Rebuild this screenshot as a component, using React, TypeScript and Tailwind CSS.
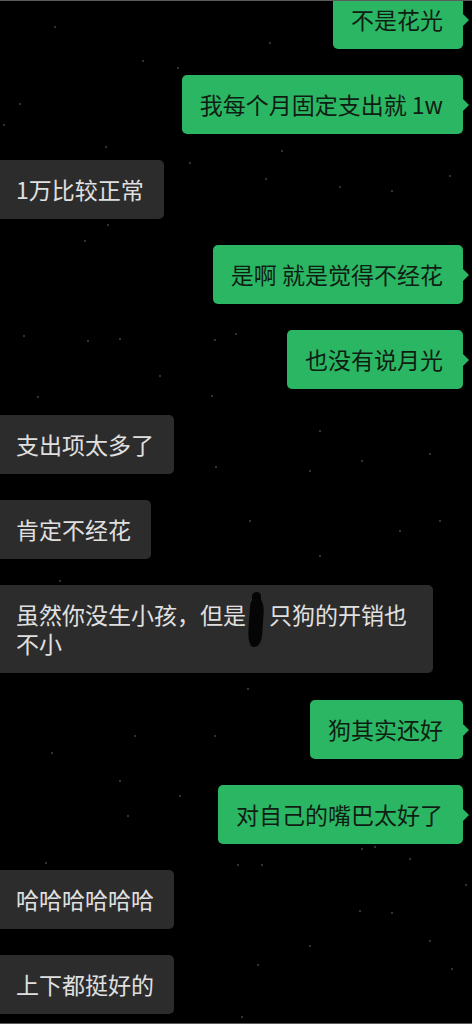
import { ReactNode } from "react";

type Msg = { me: boolean; text: ReactNode; wide?: boolean };

const font = { fontFamily: '"Noto Sans CJK SC", "Noto Sans", sans-serif' };

// the little smudge someone drew over the number of dogs
function Smudge() {
  return (
    <span className="relative inline-block w-[1em] align-top h-[29px]">
      <span className="absolute left-[3px] top-[-3px] w-[14px] h-[50px] bg-[#050505] rounded-[45%_55%_50%_40%/20%_30%_25%_35%] rotate-[4deg]" />
      <span className="absolute left-[6px] top-[-8px] w-[9px] h-[14px] bg-[#050505] rounded-full" />
    </span>
  );
}

const msgs: Msg[] = [
  { me: true, text: "不是花光" },
  { me: true, text: "我每个月固定支出就 1w" },
  { me: false, text: "1万比较正常" },
  { me: true, text: "是啊 就是觉得不经花" },
  { me: true, text: "也没有说月光" },
  { me: false, text: "支出项太多了" },
  { me: false, text: "肯定不经花" },
  {
    me: false,
    wide: true,
    text: (
      <>
        <div className="h-[29px] overflow-visible">
          虽然你没生小孩，但是
          <Smudge />
          只狗的开销也
        </div>
        <div className="h-[29px] overflow-visible">不小</div>
      </>
    ),
  },
  { me: true, text: "狗其实还好" },
  { me: true, text: "对自己的嘴巴太好了" },
  { me: false, text: "哈哈哈哈哈哈" },
  { me: false, text: "上下都挺好的" },
];

const dots = [
  [55, 26], [143, 60], [178, 67], [270, 42], [20, 103], [4, 124], [106, 146],
  [190, 162], [282, 150], [266, 178], [340, 186], [392, 190], [450, 175],
  [108, 224], [85, 240], [24, 335], [88, 340], [120, 338], [215, 339],
  [236, 333], [160, 375], [212, 395], [38, 396], [320, 430], [362, 460],
  [430, 453], [216, 466], [310, 470], [250, 520], [320, 555], [400, 530],
  [440, 520], [60, 580], [420, 640], [248, 688], [215, 735], [135, 735],
  [52, 752], [120, 780], [180, 795], [128, 815], [362, 848], [375, 846],
  [410, 858], [46, 862], [238, 864], [262, 864], [360, 910], [392, 912],
  [430, 940], [310, 945], [258, 964], [452, 968], [242, 1016], [466, 884],
];

export default function App() {
  return (
    <div
      className="relative w-[472px] h-[1024px] overflow-hidden bg-black border-t border-b border-[#5c5c5c]"
      style={font}
    >
      <svg className="absolute inset-0" width="472" height="1024">
        {dots.map(([x, y], i) => (
          <circle key={i} cx={x} cy={y} r={0.9} fill="#4a4a4a" />
        ))}
      </svg>
      <div className="relative flex flex-col gap-[26px] mt-[-11px]">
        {msgs.map((m, i) =>
          m.me ? (
            <div key={i} className="flex justify-end pr-[9px]">
              <div className="relative bg-[#2bb663] text-[#0f1d13] rounded-[5px] pl-[18px] pr-[20px] py-[15px] text-[23px] leading-[29px]">
                {m.text}
                <span className="absolute right-[-6px] top-[23px] w-0 h-0 border-y-[7px] border-y-transparent border-l-[7px] border-l-[#2bb663]" />
              </div>
            </div>
          ) : (
            <div key={i} className="flex justify-start">
              <div
                className={
                  m.wide
                    ? "bg-[#2c2c2c] text-[#e0e0e0] rounded-r-[5px] pl-[16px] pr-[20px] py-[15px] text-[23px] leading-[29px] w-[433px] mb-[1px]"
                    : "bg-[#2c2c2c] text-[#e0e0e0] rounded-r-[5px] pl-[16px] pr-[20px] py-[15px] text-[23px] leading-[29px]"
                }
              >
                {m.text}
              </div>
            </div>
          )
        )}
      </div>
    </div>
  );
}
